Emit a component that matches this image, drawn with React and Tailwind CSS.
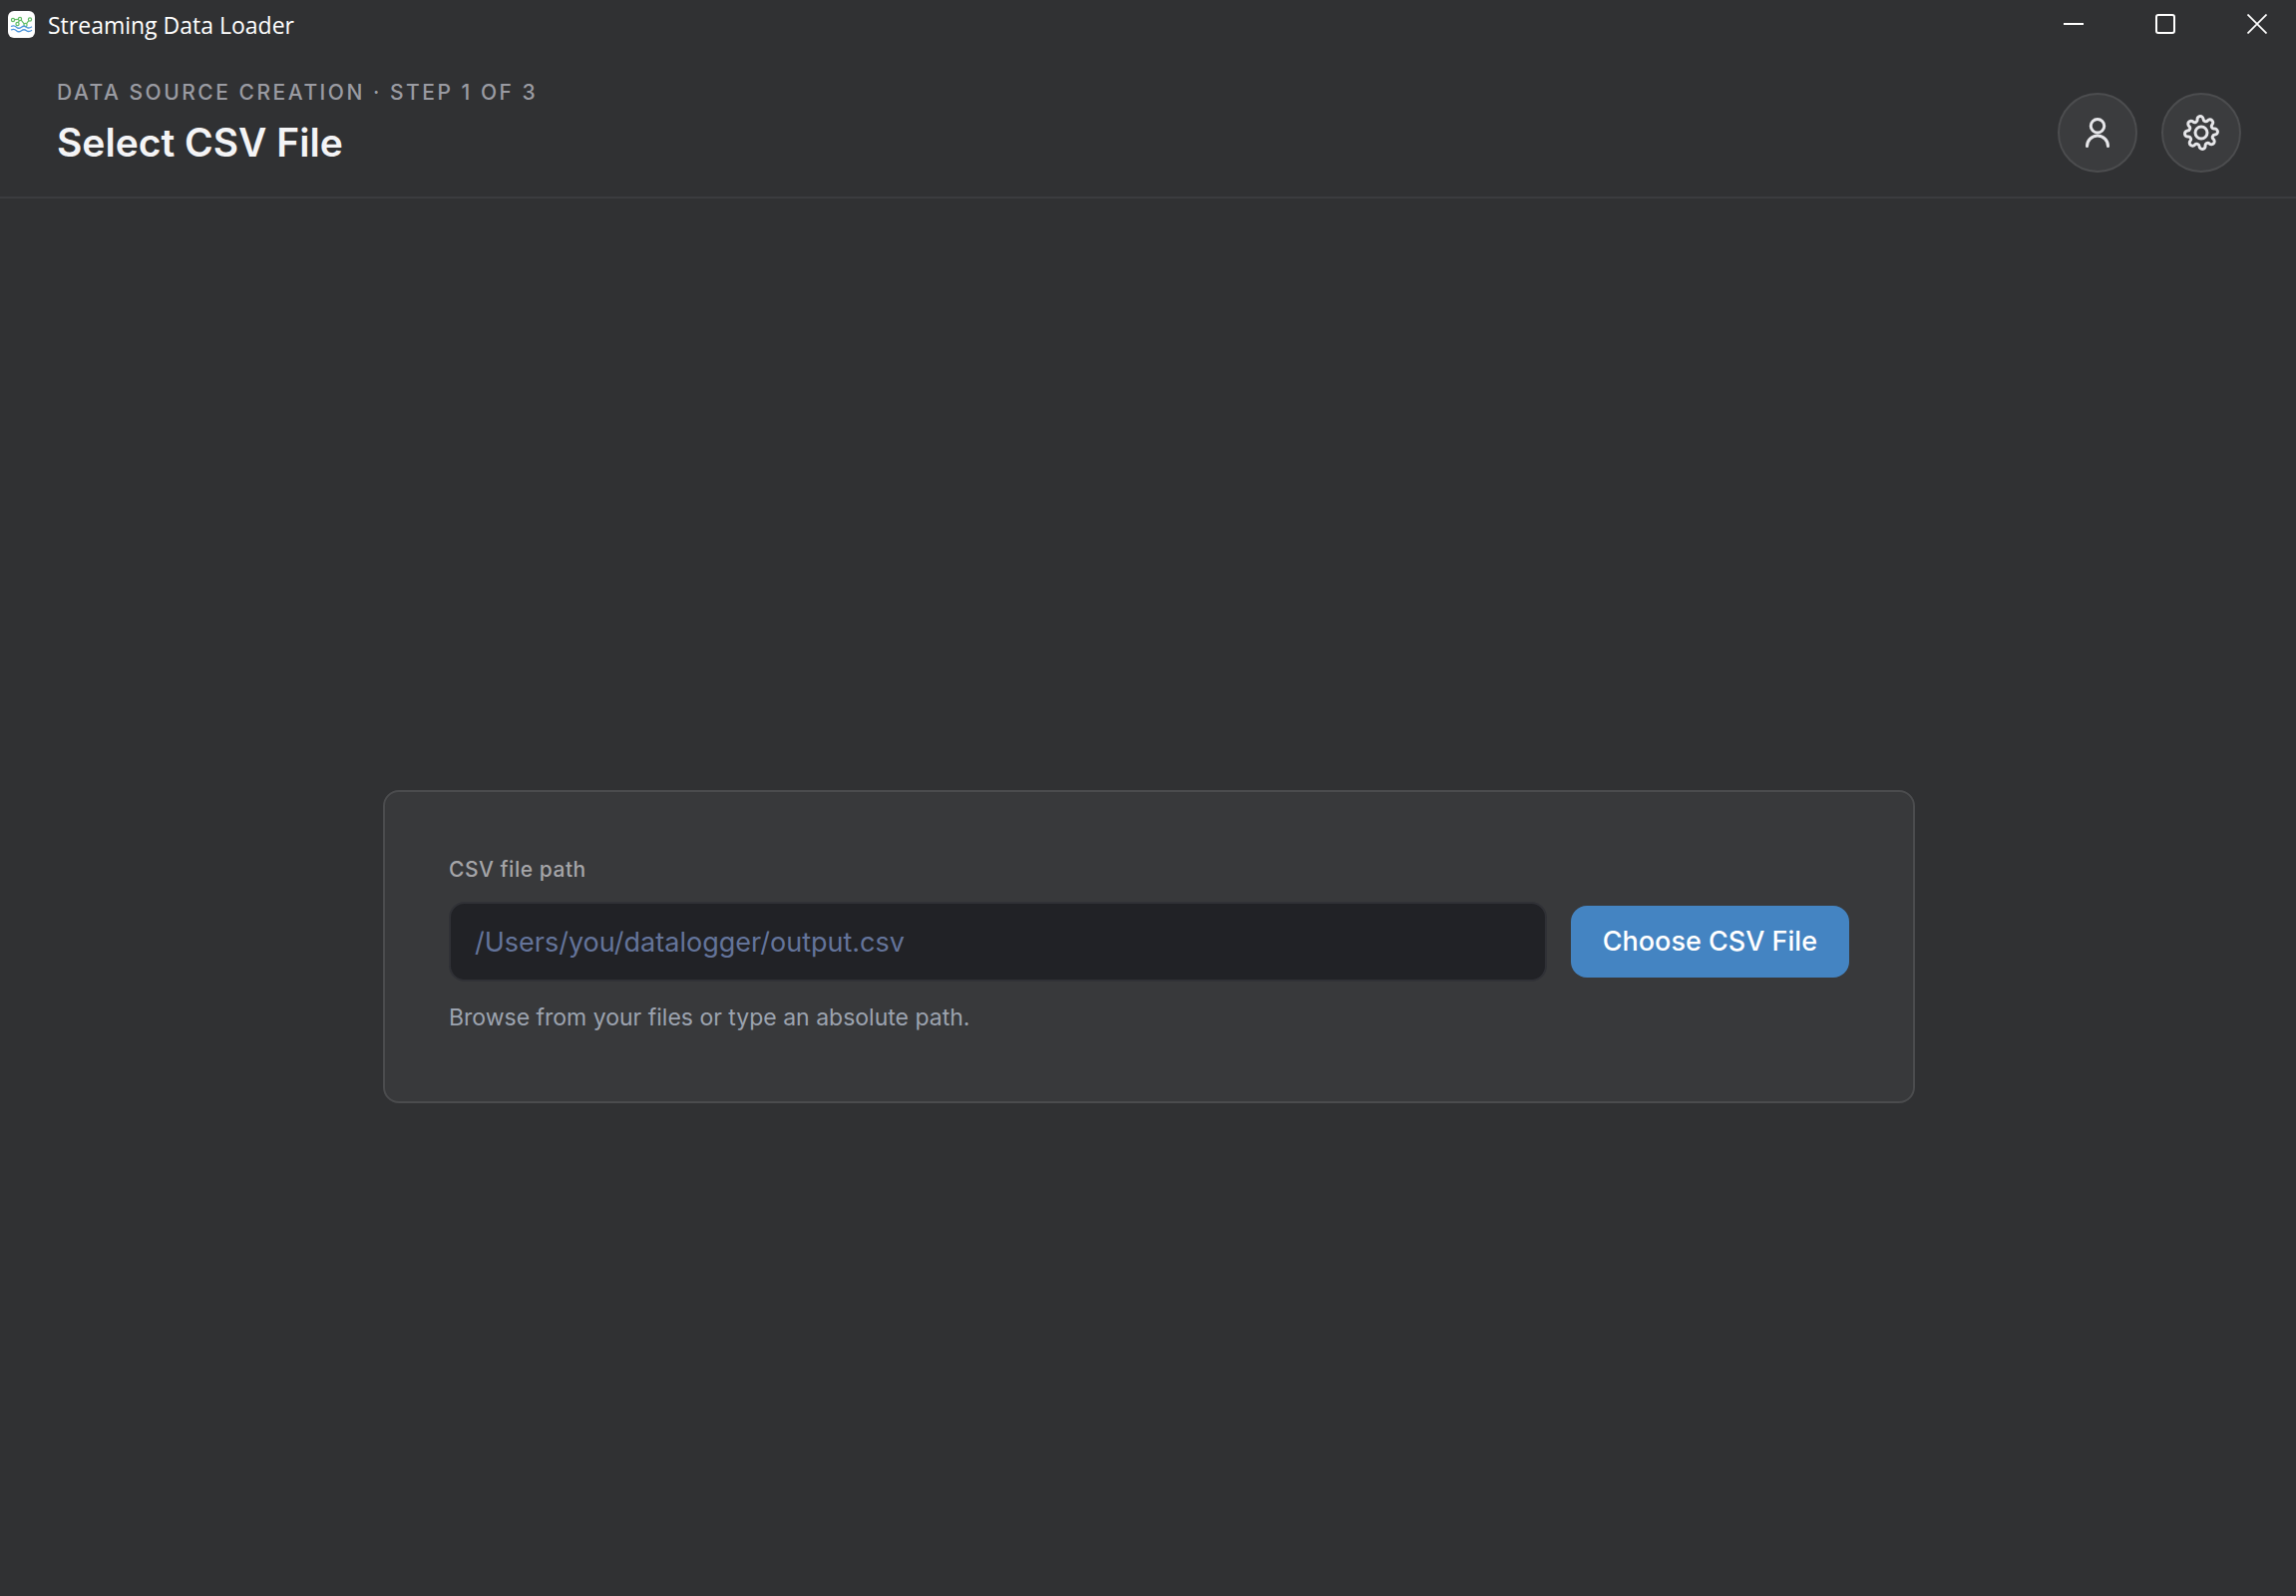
import React from "react";

const iconProps = {
  viewBox: "0 0 24 24",
  fill: "none",
  stroke: "currentColor",
  strokeWidth: 2,
  strokeLinecap: "round",
  strokeLinejoin: "round",
  "aria-hidden": true,
};

const AppLogo = () => (
  <svg viewBox="0 0 27 27" className="size-[27px]" fill="none" aria-hidden="true">
    <rect width="27" height="27" rx="6" fill="#fff" />
    <g stroke="#62bd66" strokeWidth="1.2">
      <path d="M6.6 8.6l3.9-.3M13.2 9.200l3 3.700M18.600 12.600l2.300-2.900M11.500 9.500l-1.300 2.200" />
      <circle cx="5" cy="9" r="1.6" />
      <circle cx="12" cy="8" r="1.6" />
      <circle cx="9.500" cy="13" r="1.6" />
      <circle cx="17.500" cy="14" r="1.6" />
      <circle cx="22" cy="8.500" r="1.6" />
    </g>
    <g stroke="#4a94dc" strokeWidth="1.3">
      <path d="M3 15.500c2-1 4-.8 5.500.7s3 1.500 5 0 3.500-1.200 5 0 3.500 1 5.500-.5" />
      <path d="M3 19c2-1 4-.8 5.500.7s3 1.500 5 0 3.500-1.200 5 0 3.500 1 5.500-.5" />
    </g>
  </svg>
);

const UserIcon = () => (
  <svg {...iconProps} className="size-9">
    <circle cx="12" cy="7.5" r="4.5" />
    <path d="M5 21a7 7 0 0 1 14 0" />
  </svg>
);

const GearIcon = () => (
  <svg {...iconProps} className="size-9">
    <circle cx="12" cy="12" r="4" />
    <path
      transform="rotate(-4 12 12)"
      d="M19.4 15a1.65 1.65 0 0 0 .33 1.82l.06.06a2 2 0 0 1-2.83 2.83l-.06-.06a1.65 1.65 0 0 0-1.82-.33 1.65 1.65 0 0 0-1 1.51V21a2 2 0 0 1-4 0v-.09A1.65 1.65 0 0 0 9 19.4a1.65 1.65 0 0 0-1.82.33l-.06.06a2 2 0 0 1-2.83-2.83l.06-.06a1.65 1.65 0 0 0 .33-1.82 1.65 1.65 0 0 0-1.51-1H3a2 2 0 0 1 0-4h.09A1.65 1.65 0 0 0 4.6 9a1.65 1.65 0 0 0-.33-1.82l-.06-.06a2 2 0 0 1 2.83-2.83l.06.06a1.65 1.65 0 0 0 1.82.33H9a1.65 1.65 0 0 0 1-1.51V3a2 2 0 0 1 4 0v.09a1.65 1.65 0 0 0 1 1.51 1.65 1.65 0 0 0 1.82-.33l.06-.06a2 2 0 0 1 2.83 2.83l-.06.06a1.65 1.65 0 0 0-.33 1.82V9a1.65 1.65 0 0 0 1.51 1H21a2 2 0 0 1 0 4h-.09a1.65 1.65 0 0 0-1.51 1z"
    />
  </svg>
);

const windowControls = [
  { label: "Minimize", shape: <path d="M0 10h20" strokeWidth="2" /> },
  { label: "Maximize", shape: <rect x="1" y="1" width="18" height="18" rx="2" strokeWidth="2" /> },
  { label: "Close", shape: <path d="M.5.5l19 19M19.5.5l-19 19" strokeWidth="1.7" /> },
];

const TitleBar = () => (
  <div className="flex h-12 items-center justify-between pl-2">
    <div className="flex items-center gap-[13px]">
      <AppLogo />
      <span className="pt-[2px] font-['Open_Sans','Noto_Sans',sans-serif] text-[23px] leading-8 text-white">
        Streaming Data Loader
      </span>
    </div>
    <div className="flex h-full gap-[14px]">
      {windowControls.map((item) => (
        <button
          key={item.label}
          type="button"
          aria-label={item.label}
          className="flex w-[78px] items-center justify-center text-white"
        >
          <svg viewBox="0 0 20 20" className="size-5" fill="none" stroke="currentColor" aria-hidden="true">
            {item.shape}
          </svg>
        </button>
      ))}
    </div>
  </div>
);

const RoundButton = ({ label, children }) => (
  <button
    type="button"
    aria-label={label}
    className="flex size-20 items-center justify-center rounded-full border-2 border-[#4c4d4f] bg-[#3b3c3e] text-[#e6e6e9]"
  >
    {children}
  </button>
);

const Header = () => (
  <header className="flex items-end justify-between border-b-2 border-[#3b3c3f] pt-[31px] pr-[55px] pb-6 pl-[57px]">
    <div className="flex flex-col gap-[6px]">
      <p className="text-[21px] leading-7 font-medium tracking-[0.12em] text-[#9a9ba2] uppercase">
        Data source creation · Step 1 of 3
      </p>
      <h1 className="text-[39px] leading-[60px] font-semibold text-[#f4f4f6]">Select CSV File</h1>
    </div>
    <div className="flex gap-6">
      <RoundButton label="Account">
        <UserIcon />
      </RoundButton>
      <RoundButton label="Settings">
        <GearIcon />
      </RoundButton>
    </div>
  </header>
);

const FileForm = () => (
  <form className="w-full max-w-[1536px] rounded-2xl border-2 border-[#4b4c4e] bg-[#38393b] px-16 pt-16 pb-[66px]">
    <label htmlFor="csv-path" className="block text-[21px] leading-7 font-medium tracking-wide text-[#a5a5a8]">
      CSV file path
    </label>
    <div className="mt-[18px] flex items-center gap-6">
      <input
        id="csv-path"
        type="text"
        placeholder="/Users/you/datalogger/output.csv"
        className="h-20 min-w-0 flex-1 rounded-2xl border-2 border-[#303136] bg-[#212226] px-6 text-[27px] text-[#f4f4f6] placeholder:text-[#64749a]"
      />
      <button type="button" className="h-[72px] rounded-2xl bg-[#4484c2] px-8 text-[27px] font-medium text-white">
        Choose CSV File
      </button>
    </div>
    <p className="mt-[18px] text-[23px] leading-9 text-[#9ca3af]">Browse from your files or type an absolute path.</p>
  </form>
);

const App = () => {
  return (
    <div className="flex min-h-screen flex-col bg-[#303133] font-[Inter,sans-serif]">
      <TitleBar />
      <Header />
      <main className="flex flex-1 items-center justify-center pt-[99px] pr-[55px] pl-[57px]">
        <FileForm />
      </main>
    </div>
  );
};

export default App;
